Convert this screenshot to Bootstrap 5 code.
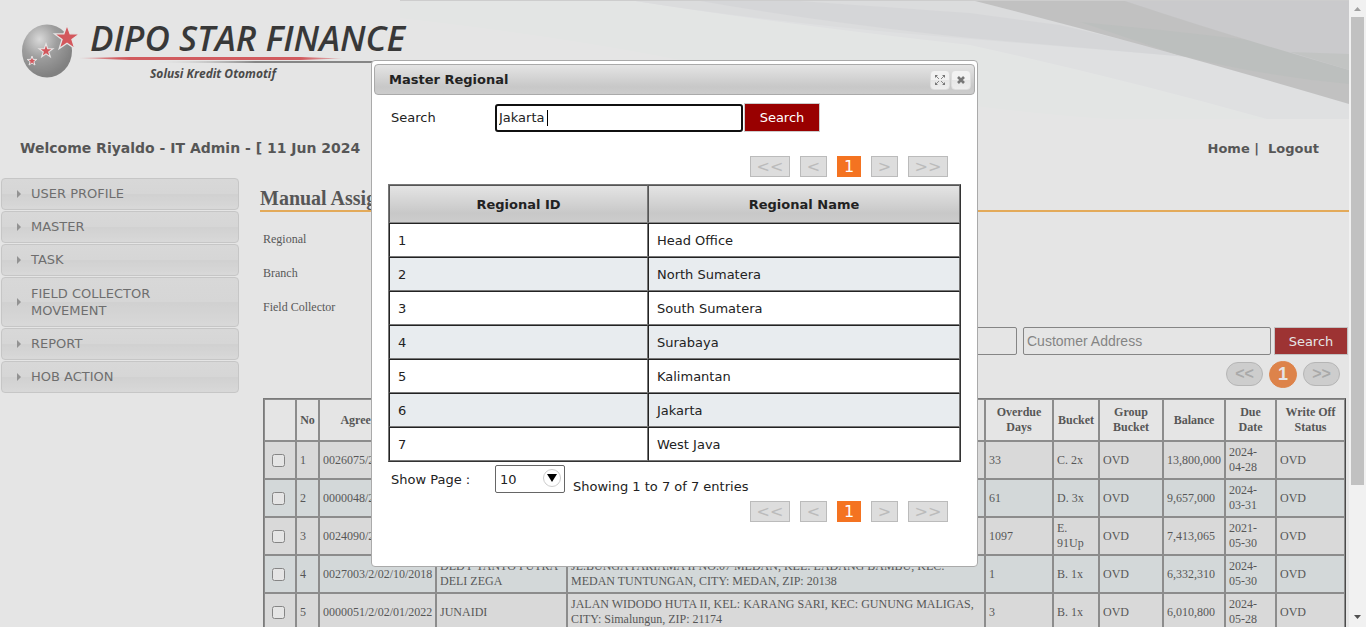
<!DOCTYPE html>
<html lang="en">
<head>
<meta charset="utf-8">
<meta name="viewport" content="width=device-width, initial-scale=1">
<title>Dipo Star Finance - Manual Assignment</title>
<link href="https://cdn.jsdelivr.net/npm/bootstrap@5.3.0/dist/css/bootstrap.min.css" rel="stylesheet">
<style>
body{height:100vh;overflow:hidden;background:#fff;color:#333;font:13px/17px "DejaVu Sans",Verdana,sans-serif}
a{color:inherit;text-decoration:none}
button,input,select{font:inherit}
.page{position:relative;overflow:hidden;min-width:0}
.banner{height:119px;position:relative}
.swoosh{position:absolute;right:0;top:0;width:949px;height:119px}
.brand{position:relative;display:block;padding:20px 0 0 16px}
.logo-name{font:italic 600 35px "Open Sans",sans-serif}
.logo-tag{font:italic bold 12px "Open Sans",sans-serif}
.userbar{height:58px;padding:21px 30px 0 20px;font-weight:bold;font-size:14px}
.userbar nav{font-size:13px}
.side{width:240px;padding:1px 1px 0;flex:none}
.side a{display:flex;align-items:center;line-height:16px;margin-bottom:1px;padding:7px 60px 7px 14px;gap:10px;border:1px solid #d3d3d3;border-radius:4px;color:#555;background:linear-gradient(#ececec 0,#eaeaea 50%,#e2e2e2 50%,#ededed 100%)}
.side .two-line{line-height:17px}
.side a::before{content:"";border:4px solid transparent;border-left-color:#888;border-right:0;flex:none;margin-left:1px}
.main-col{padding-left:20px}
h1{font:bold 20px/24px "Liberation Serif",serif;border-bottom:2px solid #fdab38;margin:9px 0 0;height:26px}
.filters{padding:20px 0 0 3px;font:12px/14px "Liberation Serif",serif;display:grid;gap:20px}
.finder{padding:13px 1px 0;gap:6px}
.finder input{width:248px;height:28px;border:1px solid #767676;border-radius:2px;padding:0 3px;font:14px "Liberation Sans",sans-serif;background:#fff}
.finder input::placeholder{color:#757575;opacity:1}
.go{background:#900;color:#fff;border:1px solid #ccc;height:28px;padding:0 13px;line-height:17px}
.finder .go{width:74px;margin-left:-3px}
.pills{padding:5px 9px 10px 0;gap:6px;height:43px;font:bold 16px "Liberation Sans",sans-serif}
.pills button{border:1px solid #bbb;background:#ddd;color:#aaa;height:24px;width:37px;border-radius:12px;padding:0;line-height:20px}
.pills .now{background:#f47321;border-color:#f47321;color:#fff;font-size:18px;width:28px;height:27px;border-radius:14px}
.grid-data{width:1083px;margin-left:3px;table-layout:fixed;border-collapse:separate;border-spacing:0;border:1px solid #666;border-right-color:#222;font:12px/15px "Liberation Serif",serif}
.grid-data th,.grid-data td{border:1px solid #808080;height:38px;padding:0 3px;overflow:hidden}
.grid-data th{height:42px;text-align:center;padding:0}
.grid-data tbody tr:nth-child(odd){background:#eee}
.grid-data tbody tr:nth-child(even){background:#e5edee}
.grid-data td:first-child{padding-left:7px}
.grid-data input{width:13px;height:13px;display:block;margin:0}
.veil{position:absolute;inset:0;background:#aaa;opacity:.3}
.dlg{position:absolute;left:371px;top:60px;width:607px;height:507px;background:#fff;border:1px solid #aaa;border-radius:4px;padding:3px 2px;color:#222}
.dlg-head{height:31px;border:1px solid #aaa;border-radius:4px;background:linear-gradient(#e4e4e4,#c8c8c8 75%,#ccc);padding:0 3px 0 14px;gap:1px;font-weight:bold}
.dlg-head button{width:20px;height:20px;border:1px solid #ddd;border-radius:4px;background:linear-gradient(#f2f2f2 50%,#e6e6e6 50%,#eee);padding:0;display:grid;place-items:center}
.dlg-body{padding:0 14px}
.find{padding:8px 0 0 3px}
.find label,.foot label{width:104px}
.entry{position:relative;margin-right:1px}
.entry input{display:block;width:248px;height:28px;border:2px solid #101010;border-radius:3px;padding:0 2px;outline:0;color:#222;caret-color:transparent}
.entry::after{content:"";position:absolute;left:52px;top:6px;width:1px;height:16px;background:#000}
.find .go{width:76px;height:29px}
.pgr{gap:10px;padding-right:13px}
.find + .pgr{margin-top:24px}
.pgr button{height:21px;border:1px solid #bbb;background:#ddd;color:#bbb;font-size:16px;line-height:19px;padding:0;width:40px}
.pgr .one{width:27px}
.pgr .now{width:24px;background:#f47321;border-color:#f47321;color:#fff}
.reg{width:573px;margin-top:7px;border-collapse:separate;border-spacing:0;border:1px solid;border-color:#777 #333 #333 #777}
.reg th{height:38px;text-align:center;background:linear-gradient(#e4e4e4,#c8c8c8 75%,#ccc);border:1px solid;border-color:#555 #777 #888 #555}
.reg td{height:34px;border:1px solid;border-color:#222 #777 #777 #222;padding:0 8px}
.reg tbody tr:nth-child(even){background:#e8ecef}
.foot{padding:3px 0 0 3px;height:39px}
.foot label{line-height:29px}
.foot .tally{padding-top:13px}
.picker{position:relative;width:70px;margin-right:8px}
.picker select{appearance:none;width:70px;height:28px;border:1px solid #666;border-radius:2px;background:#fff;padding:0 4px;color:#222}
.picker svg{position:absolute;right:4px;top:4px;pointer-events:none}
.vbar{width:17px;flex:none;background:#f1f1f1;padding:6px 2px 7px}
.vbar i{display:block;width:13px;background:#c1c1c1;height:468px}
</style>
</head>
<body class="d-flex">
<div class="page flex-grow-1">
<header class="banner">
<svg class="swoosh" viewBox="400 0 949 119" preserveAspectRatio="none" aria-hidden="true">
<path d="M400 1H1349V119H1110Q960 110 680 60Q560 36 400 18Z" fill="#fdfffe"/>
<path d="M635 1H1349V119H1267Q1120 78 970 45Q780 24 635 1Z" fill="#f6f8fa"/>
<path d="M635 1H975L1200 58L970 39Q780 24 635 1Z" fill="#f1f2f4"/>
<path d="M700 1H800Q900 8 970 13L1060 25L1200 58L970 38Q820 22 700 1Z" fill="#e9eaed"/>
<path d="M975 1H1349V104Q1160 48 975 1Z" fill="#ccc"/>
<path d="M1080 22Q1250 38 1349 54V84Q1260 76 1175 54Z" fill="#c5c9c7"/>
<path d="M1125 1H1349V70Q1230 36 1125 1Z" fill="#d8d8db"/>
<path d="M1290 52L1349 54V70Z" fill="#cdd0cf"/>
<path d="M400 0H1349V1H400Z" fill="#ddd"/>
</svg>
<a class="brand" href="#" aria-label="Dipo Star Finance">
<svg width="400" height="64" viewBox="16 20 400 64">
<defs><radialGradient id="ball" cx=".35" cy=".28" r=".7"><stop offset="0" stop-color="#eee"/><stop offset=".5" stop-color="#999"/><stop offset="1" stop-color="#707070"/></radialGradient>
<linearGradient id="rl"><stop offset="0" stop-color="#e23a40" stop-opacity=".3"/><stop offset=".15" stop-color="#e23a40"/><stop offset=".85" stop-color="#e23a40"/><stop offset="1" stop-color="#e23a40" stop-opacity=".3"/></linearGradient>
<linearGradient id="gl"><stop offset="0" stop-color="#777" stop-opacity="0"/><stop offset=".4" stop-color="#777"/></linearGradient>
<path id="st" d="M0-10L2.4-3.2 9.6-3.1 3.8 1.2 6 8.1 0 4 -6 8.1 -3.8 1.2 -9.6-3.1 -2.4-3.2Z"/></defs>
<ellipse cx="47" cy="51" rx="25" ry="26.500" fill="url(#ball)"/>
<g fill="#e6343c" stroke="#fff"><use href="#st" transform="translate(67 38) scale(1.3)" stroke-width="1"/><use href="#st" transform="translate(46 51) scale(.72)" stroke-width="1.600"/><use href="#st" transform="translate(32 61) scale(.5)" stroke-width="2"/></g>
<path d="M79 58L130 57H300L342 58.500 300 60H130Z" fill="url(#rl)"/>
<path d="M148 62L260 61H416V63H260Z" fill="url(#gl)"/>
<text class="logo-name" x="90" y="51" fill="#080808">DIPO STAR FINANCE</text>
<text class="logo-tag" x="150" y="78" fill="#222">Solusi Kredit Otomotif</text>
</svg>
</a>
</header>
<div class="userbar d-flex justify-content-between text-nowrap"><span>Welcome Riyaldo - IT Admin - [ 11 Jun 2024</span><nav><a href="#">Home</a> | &nbsp;<a href="#">Logout</a></nav></div>
<div class="d-flex">
<nav class="side"><a href="#">USER PROFILE</a><a href="#">MASTER</a><a href="#">TASK</a><a href="#" class="two-line">FIELD COLLECTOR MOVEMENT</a><a href="#">REPORT</a><a href="#">HOB ACTION</a></nav>
<main class="main-col flex-grow-1">
<h1>Manual Assignment</h1>
<div class="filters"><span>Regional</span><span>Branch</span><span>Field Collector</span></div>
<div class="finder d-flex justify-content-end align-items-center"><input aria-label="Customer Name"><input aria-label="Customer Address" placeholder="Customer Address"><button class="go">Search</button></div>
<div class="pills d-flex justify-content-end align-items-center"><button>&lt;&lt;</button><button class="now">1</button><button>&gt;&gt;</button></div>
<table class="grid-data">
<colgroup><col style="width:32px"><col style="width:23px"><col style="width:117px"><col style="width:131px"><col style="width:418px"><col style="width:68px"><col style="width:46px"><col style="width:64px"><col style="width:62px"><col style="width:51px"><col></colgroup>
<thead><tr><th></th><th>No</th><th>Agreement No</th><th></th><th></th><th>Overdue<br>Days</th><th>Bucket</th><th>Group<br>Bucket</th><th>Balance</th><th>Due<br>Date</th><th>Write Off<br>Status</th></tr></thead>
<tbody>
<tr><td><input type="checkbox" aria-label="Row 1"></td><td>1</td><td>0026075/2</td><td></td><td></td><td>33</td><td>C. 2x</td><td>OVD</td><td>13,800,000</td><td>2024-04-28</td><td>OVD</td></tr>
<tr><td><input type="checkbox" aria-label="Row 2"></td><td>2</td><td>0000048/2</td><td></td><td></td><td>61</td><td>D. 3x</td><td>OVD</td><td>9,657,000</td><td>2024-03-31</td><td>OVD</td></tr>
<tr><td><input type="checkbox" aria-label="Row 3"></td><td>3</td><td>0024090/2</td><td></td><td></td><td>1097</td><td>E. 91Up</td><td>OVD</td><td>7,413,065</td><td>2021-05-30</td><td>OVD</td></tr>
<tr><td><input type="checkbox" aria-label="Row 4"></td><td>4</td><td>0027003/2/02/10/2018</td><td>DEDY YANTO PUTRA DELI ZEGA</td><td>JL.BUNGA PARIAMA II NO.07 MEDAN, KEL: LADANG BAMBU, KEC: MEDAN TUNTUNGAN, CITY: MEDAN, ZIP: 20138</td><td>1</td><td>B. 1x</td><td>OVD</td><td>6,332,310</td><td>2024-05-30</td><td>OVD</td></tr>
<tr><td><input type="checkbox" aria-label="Row 5"></td><td>5</td><td>0000051/2/02/01/2022</td><td>JUNAIDI</td><td>JALAN WIDODO HUTA II, KEL: KARANG SARI, KEC: GUNUNG MALIGAS, CITY: Simalungun, ZIP: 21174</td><td>3</td><td>B. 1x</td><td>OVD</td><td>6,010,800</td><td>2024-05-28</td><td>OVD</td></tr>
</tbody></table>
</main></div>
<div class="veil"></div>
<section class="dlg" role="dialog" aria-label="Master Regional">
<div class="dlg-head d-flex align-items-center"><span class="me-auto">Master Regional</span>
<button aria-label="Maximize"><svg width="10" height="10" viewBox="0 0 10 10" fill="#777"><path d="M0 0H3L0 3ZM10 0V3L7 0ZM10 10H7L10 7ZM0 10V7L3 10Z"/><path d="M1 1L4 4M9 1L6 4M9 9L6 6M1 9L4 6" stroke="#888"/></svg></button>
<button aria-label="Close"><svg width="8" height="8" viewBox="0 0 8 8" stroke="#777" stroke-width="2.600"><path d="M1 1L7 7M7 1L1 7"/></svg></button></div>
<div class="dlg-body">
<div class="find d-flex align-items-center"><label for="q">Search</label><span class="entry"><input id="q" value="Jakarta" autofocus></span><button class="go">Search</button></div>
<div class="pgr d-flex justify-content-end"><button>&lt;&lt;</button><button class="one">&lt;</button><button class="now">1</button><button class="one">&gt;</button><button>&gt;&gt;</button></div>
<table class="reg"><colgroup><col style="width:259px"><col></colgroup><thead><tr><th>Regional ID</th><th>Regional Name</th></tr></thead><tbody>
<tr><td>1</td><td>Head Office</td></tr><tr><td>2</td><td>North Sumatera</td></tr><tr><td>3</td><td>South Sumatera</td></tr><tr><td>4</td><td>Surabaya</td></tr><tr><td>5</td><td>Kalimantan</td></tr><tr><td>6</td><td>Jakarta</td></tr><tr><td>7</td><td>West Java</td></tr></tbody></table>
<div class="foot d-flex"><label for="n">Show Page :</label><span class="picker"><select id="n"><option>10</option></select><svg width="18" height="18" viewBox="0 0 18 18"><circle cx="9" cy="9" r="8.500" fill="#fff" stroke="#ccc"/><path d="M4 5H14L9 13Z"/></svg></span><span class="tally">Showing 1 to 7 of 7 entries</span></div>
<div class="pgr d-flex justify-content-end"><button>&lt;&lt;</button><button class="one">&lt;</button><button class="now">1</button><button class="one">&gt;</button><button>&gt;&gt;</button></div>
</div></section>
</div>
<div class="vbar d-flex flex-column" aria-hidden="true"><svg width="13" height="11" viewBox="0 0 13 11"><path d="M3 5L6.500 1 10 5Z" fill="#a0a0a0"/></svg><i></i><svg class="mt-auto" width="13" height="6" viewBox="0 0 13 6"><path d="M3 1H10L6.500 5Z" fill="#505050"/></svg></div>
<script src="https://cdn.jsdelivr.net/npm/bootstrap@5.3.0/dist/js/bootstrap.bundle.min.js"></script>
</body>
</html>
